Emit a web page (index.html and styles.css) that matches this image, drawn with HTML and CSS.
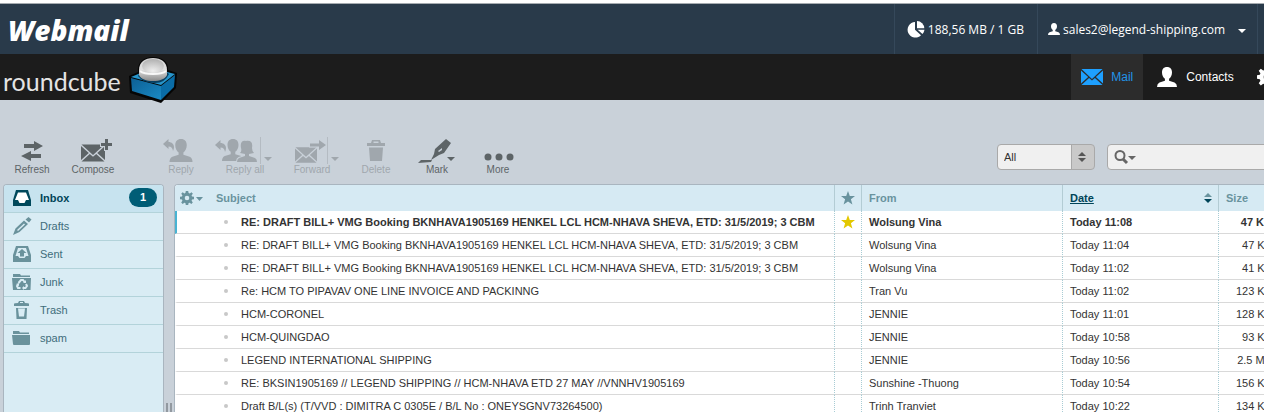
FILE: index.html
```html
<!DOCTYPE html>
<html lang="en">
<head>
    <meta charset="UTF-8">
    <meta name="viewport" content="width=device-width, initial-scale=1.0">
    <title>Roundcube Webmail :: Inbox</title>
    <link rel="stylesheet" href="styles.css">
</head>
<body>
    <!-- Shared shapes -->
    <svg class="symbols" aria-hidden="true">
        <symbol id="person" viewBox="0 0 24 24">
            <path d="M12 0C8 0 6 2.500 6 6.500C6 10 7.500 12.500 9.500 14V16.500L3 18.500Q0 20 0 24H24Q24 20 21 18.500L14.500 16.500V14C16.500 12.500 18 10 18 6.500C18 2.500 16 0 12 0Z"/>
        </symbol>
        <symbol id="envelope" viewBox="0 0 24 17">
            <path d="M0.500 0H23.500L12 10.500ZM0 1.500L7.800 8.500L0 15.500ZM24 1.500V15.500L16.200 8.500ZM0.500 17L8.800 9.500L12 12.300L15.200 9.500L23.500 17Z"/>
        </symbol>
        <symbol id="back-arrow" viewBox="0 0 12 12">
            <path d="M5.500 0V3C10 3 12.500 7 10 12C9.500 9 8.500 7.500 5.500 7.500V10L0 5Z"/>
        </symbol>
        <symbol id="gear" viewBox="0 0 14 14">
            <path fill-rule="evenodd" d="M5.800 0H8.200L8.600 2L9.800 2.500L11.500 1.200L12.900 2.700L11.600 4.300L12 5.500L14 5.800V8.200L12 8.600L11.600 9.700L12.800 11.400L11.300 12.900L9.700 11.700L8.600 12.100L8.200 14H5.800L5.400 12.100L4.300 11.700L2.700 12.900L1.200 11.400L2.400 9.700L2 8.600L0 8.200V5.800L2 5.500L2.400 4.300L1.200 2.700L2.700 1.200L4.300 2.500L5.400 2ZM7 4.700A2.300 2.300 0 1 0 7 9.300A2.300 2.300 0 1 0 7 4.700Z"/>
        </symbol>
        <symbol id="star" viewBox="0 0 14 14">
            <path d="M7 0L8.800 4.900L14 5L9.900 8.200L11.400 13.400L7 10.400L2.600 13.400L4.100 8.200L0 5L5.200 4.900Z"/>
        </symbol>
    </svg>

    <!-- Webmail bar -->
    <div class="webmail-bar">
        <a class="webmail-logo" href="#">Webmail</a>
        <div class="account">
            <div class="account-item quota">
                <svg width="18" height="17" viewBox="0 0 18 17"><path d="M8 1A7.800 7.800 0 1 0 14 14.200L8 8.800Z"/><path d="M10 0A7.500 7.500 0 0 1 17.300 7.200H10Z"/><path d="M10.600 8.700H17.500A8 8 0 0 1 15.500 13Z"/></svg>
                188,56 MB / 1 GB
            </div>
            <button type="button" class="account-item user">
                <svg width="12" height="12"><use href="#person"/></svg>
                sales2@legend-shipping.com
                <svg class="user-caret" width="8" height="4"><path d="M0 0H8L4 4Z"/></svg>
            </button>
            <div class="account-end"></div>
        </div>
    </div>

    <!-- Roundcube header -->
    <header>
        <a class="logo" href="#">
            <span>roundcube</span>
            <svg width="50" height="48" viewBox="0 0 50 48">
                <defs>
                    <linearGradient id="ball" x1="0" y1="0" x2="0" y2="1">
                        <stop offset="0" stop-color="#d4d4d4"/>
                        <stop offset="0.5" stop-color="#e0e0e0"/>
                        <stop offset="1" stop-color="#8c8c8c"/>
                    </linearGradient>
                    <radialGradient id="glass" cx="0.5" cy="0.85" r="0.8">
                        <stop offset="0" stop-color="#eeeeee"/>
                        <stop offset="1" stop-color="#b4b4b4"/>
                    </radialGradient>
                    <linearGradient id="side" x1="0" y1="0" x2="1" y2="1">
                        <stop offset="0" stop-color="#0d5f94"/>
                        <stop offset="1" stop-color="#1a8ac4"/>
                    </linearGradient>
                </defs>
                <path fill="#050505" d="M0 19L9 15C8 5 15 0 24 0S40 5 39 13L48 16L47 31L32 46L1 36Z"/>
                <path fill="#2795cb" d="M2 20L14 15H38L46 17L32 28Z"/>
                <path fill="url(#side)" d="M2 21L32 29V43L3 34Z"/>
                <path fill="#0a6ca6" d="M32 29L46 18L45 30L32 43Z"/>
                <path fill="#083f61" d="M9 19Q14 26 26 26Q36 26 40 17L36 14H12Z"/>
                <path fill="url(#ball)" d="M10 13C10 5 16 1 24 1S38 5 38 13V18C36 22 31 24 24 24S12 22 10 18Z"/>
                <ellipse cx="24" cy="9" rx="11" ry="7" fill="url(#glass)"/>
                <path fill="none" stroke="#f8f8f8" stroke-width="2" d="M11 14C16 18 32 18 37 14"/>
            </svg>
        </a>
        <nav>
            <a class="active" href="#"><svg width="22" height="16" viewBox="0 0 24 17" preserveAspectRatio="none"><use href="#envelope" width="24" height="17"/></svg>Mail</a>
            <a href="#"><svg width="20" height="20"><use href="#person"/></svg>Contacts</a>
            <a href="#"><svg width="20" height="20"><use href="#gear"/></svg>Settings</a>
        </nav>
    </header>

    <!-- Toolbar -->
    <div class="toolbar">
        <div class="actions">
            <button type="button">
                <svg width="60" height="28"><path d="M22 8H32V5L41 10L32 15V12H22ZM39 18H29V15L19 20L29 25V22H39Z"/></svg>
                Refresh
            </button>
            <button type="button">
                <svg width="60" height="28"><use href="#envelope" x="18" y="8" width="24" height="18"/><path class="plus" d="M42 3H45V7H49V10H45V14H42V10H38V7H42Z"/></svg>
                Compose
            </button>
            <button type="button" class="first-reply" disabled>
                <svg width="60" height="28"><use href="#back-arrow" x="12" y="3" width="12" height="12"/><use href="#person" x="18" y="3" width="24" height="23"/></svg>
                Reply
            </button>
            <button type="button" class="wide" disabled>
                <svg width="66" height="28"><use href="#back-arrow" x="3" y="4" width="12" height="12"/><use href="#person" x="10" y="3" width="22" height="22"/><path class="outlined" d="M34 5C39 4 41 7 40 12Q40 15 42 17L37 18V20L43 22Q45 23 45 26H25Q25 23 27 22L33 20V18L28 17Q30 15 29 12C28 7 30 4 34 5Z"/><path class="divider" d="M48.500 1V28"/><path d="M52 21H60L56 25Z"/></svg>
                Reply all
            </button>
            <button type="button" class="wide" disabled>
                <svg width="66" height="28"><use href="#envelope" x="16" y="11" width="22" height="16"/><path class="outlined" d="M31 7.500H40V4L47 9L40 14V10.500H31Z"/><path class="divider" d="M48.500 1V28"/><path d="M52 21H60L56 25Z"/></svg>
                Forward
            </button>
            <button type="button" disabled>
                <svg width="60" height="28"><path d="M21 7H25L26 4H34L35 7H39V10H21ZM27.500 5.500V7H32.500V5.500ZM23 11.500H37L36 25H24Z" fill-rule="evenodd"/></svg>
                Delete
            </button>
            <button type="button">
                <svg width="60" height="28"><path fill-rule="evenodd" d="M39 3L44 7L37 17L32 19L24 24L27 18L28 13ZM35 12L31 15L32 16L35 14Z"/><path d="M14 24H25L24 26L11 27Z"/><path d="M40 21H48L44 25Z"/></svg>
                Mark
            </button>
            <button type="button">
                <svg width="60" height="28"><circle cx="20" cy="21" r="3.500"/><circle cx="31" cy="21" r="3.500"/><circle cx="42" cy="21" r="3.500"/></svg>
                More
            </button>
        </div>
        <div class="search-tools">
            <div class="filter">
                <select aria-label="Filter"><option>All</option><option>Unread</option><option>Flagged</option></select>
                <svg width="8" height="12"><path d="M0 5L4 1L8 5ZM0 7H8L4 11Z"/></svg>
            </div>
            <div class="search-box">
                <svg width="24" height="16"><circle cx="6" cy="6.500" r="4.500"/><path class="handle" d="M9 10L13 14"/><path class="caret" d="M14 7H22L18 11Z"/></svg>
                <input type="text" aria-label="Search">
            </div>
        </div>
    </div>

    <main>
        <!-- Folders -->
        <ul class="folders">
            <li class="selected"><a href="#"><svg width="20" height="18"><path d="M4 1H16L19 11V17H1V11Z"/><path class="opening" d="M6 3.500H14L17 11H14L12.500 14H7.500L6 11H3Z"/></svg>Inbox<span class="count">1</span></a></li>
            <li><a href="#"><svg width="20" height="18"><path fill-rule="evenodd" d="M1 18L3.500 11.500L12 3.500L16 7L7.500 15ZM5 13L6 14L13 7.500L12 6.500Z"/><path d="M13.500 2.500L16.500 0L19.500 2.500L17 5.500Z"/></svg>Drafts</a></li>
            <li><a href="#"><svg width="20" height="18"><path fill-rule="evenodd" d="M4 1H16L19 10V17H1V10ZM6 3L3.500 11H6L7.500 13H12.500L14 11H16.500L14 3Z"/><path d="M10 4L14.500 8H12V11.500H8V8H5.500Z"/></svg>Sent</a></li>
            <li><a href="#"><svg width="20" height="18"><path d="M1 1H8L9 2.500H18V4H1ZM0 5H19L18.500 17H1Z"/><path class="recycle" d="M6.500 10L9 7H11L13 9.500M14 11L15 13L13.500 15H11M8.500 15H6L5 13L6 11.500"/><path class="recycle-tips" d="M11 10H14V7ZM12 13V17L10 15ZM4 11L7 10V13Z"/></svg>Junk</a></li>
            <li><a href="#"><svg width="20" height="20"><path fill-rule="evenodd" d="M2 4Q2 3 6 3L7 1H12L13 3Q17 3 17 4V6H2ZM8 2V3H11V2ZM4 8H15L14.500 19H4.500ZM6 8.500L7 16.500H12L13 8.500Z"/></svg>Trash</a></li>
            <li><a href="#"><svg width="20" height="18"><path d="M1 2H7L8 3.500H17V5H1ZM0 6H18V15Q18 16 17 16H2Q1 16 1 15Z"/></svg>spam</a></li>
        </ul>

        <div class="splitter"><span></span><span></span></div>

        <!-- Messages -->
        <div class="messages">
            <table>
                <colgroup>
                    <col>
                    <col class="col-flag">
                    <col class="col-from">
                    <col class="col-date">
                    <col class="col-size">
                </colgroup>
                <thead>
                    <tr>
                        <th>
                            <div class="subject-head">
                                <button type="button" aria-label="List options"><svg width="24" height="14"><use href="#gear" width="14" height="14"/><path d="M16 6H23L19.500 10Z"/></svg></button>
                                <a href="#">Subject</a>
                            </div>
                        </th>
                        <th class="flag"><svg width="14" height="14"><use href="#star"/></svg></th>
                        <th><a href="#">From</a></th>
                        <th>
                            <a class="sorted" href="#"><span>Date</span><svg width="8" height="10"><path class="up" d="M0 4L4 0L8 4Z"/><path d="M0 6H8L4 10Z"/></svg></a>
                        </th>
                        <th><a href="#">Size</a></th>
                    </tr>
                </thead>
                <tbody>
                    <tr class="unread">
                        <td><a href="#">RE: DRAFT BILL+ VMG Booking BKNHAVA1905169 HENKEL LCL HCM-NHAVA SHEVA, ETD: 31/5/2019; 3 CBM</a></td>
                        <td class="flag"><svg width="14" height="14"><use href="#star"/></svg></td>
                        <td>Wolsung Vina</td>
                        <td>Today 11:08</td>
                        <td class="size">47 KB</td>
                    </tr>
                    <tr>
                        <td><a href="#">RE: DRAFT BILL+ VMG Booking BKNHAVA1905169 HENKEL LCL HCM-NHAVA SHEVA, ETD: 31/5/2019; 3 CBM</a></td>
                        <td></td>
                        <td>Wolsung Vina</td>
                        <td>Today 11:04</td>
                        <td class="size">47 KB</td>
                    </tr>
                    <tr>
                        <td><a href="#">RE: DRAFT BILL+ VMG Booking BKNHAVA1905169 HENKEL LCL HCM-NHAVA SHEVA, ETD: 31/5/2019; 3 CBM</a></td>
                        <td></td>
                        <td>Wolsung Vina</td>
                        <td>Today 11:02</td>
                        <td class="size">41 KB</td>
                    </tr>
                    <tr>
                        <td><a href="#">Re: HCM TO PIPAVAV ONE LINE INVOICE AND PACKINNG</a></td>
                        <td></td>
                        <td>Tran Vu</td>
                        <td>Today 11:02</td>
                        <td class="size">123 KB</td>
                    </tr>
                    <tr>
                        <td><a href="#">HCM-CORONEL</a></td>
                        <td></td>
                        <td>JENNIE</td>
                        <td>Today 11:01</td>
                        <td class="size">128 KB</td>
                    </tr>
                    <tr>
                        <td><a href="#">HCM-QUINGDAO</a></td>
                        <td></td>
                        <td>JENNIE</td>
                        <td>Today 10:58</td>
                        <td class="size">93 KB</td>
                    </tr>
                    <tr>
                        <td><a href="#">LEGEND INTERNATIONAL SHIPPING</a></td>
                        <td></td>
                        <td>JENNIE</td>
                        <td>Today 10:56</td>
                        <td class="size">2.5 MB</td>
                    </tr>
                    <tr>
                        <td><a href="#">RE: BKSIN1905169 // LEGEND SHIPPING // HCM-NHAVA ETD 27 MAY //VNNHV1905169</a></td>
                        <td></td>
                        <td>Sunshine -Thuong</td>
                        <td>Today 10:54</td>
                        <td class="size">156 KB</td>
                    </tr>
                    <tr>
                        <td><a href="#">Draft B/L(s) (T/VVD : DIMITRA C 0305E / B/L No : ONEYSGNV73264500)</a></td>
                        <td></td>
                        <td>Trinh Tranviet</td>
                        <td>Today 10:22</td>
                        <td class="size">134 KB</td>
                    </tr>
                </tbody>
            </table>
        </div>
    </main>
</body>
</html>
```

FILE: styles.css
```css
/* General Styles */
* {
    box-sizing: border-box;
}

body {
    display: flex;
    flex-direction: column;
    height: 100vh;
    margin: 0;
    overflow: hidden;
    background-color: #c9d1d9;
    color: #333;
    font-family: "Liberation Sans", Arial, sans-serif;
    font-size: 11px;
}

a {
    color: inherit;
    text-decoration: none;
}

button {
    padding: 0;
    border: none;
    background: none;
    color: inherit;
    font: inherit;
    cursor: pointer;
}

svg {
    flex: none;
    fill: currentColor;
}

.symbols {
    position: absolute;
    width: 0;
    height: 0;
}

/* Webmail bar */
.webmail-bar {
    display: flex;
    flex: none;
    justify-content: space-between;
    height: 54px;
    border-top: 3px solid #fff;
    background-color: #293a4a;
    box-shadow: inset 0 1px #a5abb0;
    color: #fff;
}

.webmail-logo {
    padding-left: 8px;
    font: italic 800 28px/54px "Open Sans", sans-serif;
}

.account {
    display: flex;
    padding-top: 1px;
    font: 12px "Open Sans", sans-serif;
}

.account-item {
    display: flex;
    align-items: center;
    border-left: 1px solid #35485a;
    font: inherit;
}

.quota {
    gap: 3px;
    padding: 0 13px 0 12px;
}

.user {
    gap: 3px;
    padding: 0 11px 0 10px;
}

.user-caret {
    margin: 3px 0 0 10px;
}

.account-end {
    width: 7px;
    border-left: 1px solid #35485a;
}

/* Roundcube header */
header {
    display: flex;
    flex: none;
    justify-content: space-between;
    height: 46px;
    background-color: #1c1c1c;
    color: #fff;
}

.logo {
    display: flex;
    gap: 8px;
    padding: 3px 0 0 3px;
    color: #e4e4e4;
    font: 25px/48px Lato, sans-serif;
}

nav {
    display: flex;
    margin-right: -74px;
    font-size: 12px;
}

nav a {
    display: flex;
    align-items: center;
    gap: 9px;
    padding: 0 9px 0 14px;
}

nav .active {
    gap: 8px;
    padding: 0 10px;
    background-color: #2c2c2c;
    color: #2194e8;
}

nav .active svg {
    color: #1ea0ff;
}

/* Toolbar */
.toolbar {
    display: flex;
    flex: none;
    justify-content: space-between;
    height: 84px;
    padding: 36px 0 0 2px;
}

.actions {
    display: flex;
    gap: 1px;
    height: 40px;
    color: #5d6467;
    font-size: 10px;
}

.actions button {
    display: flex;
    flex-direction: column;
    align-items: center;
    width: 60px;
    line-height: 12px;
}

.actions .wide {
    width: 66px;
}

.actions .first-reply {
    margin-left: 27px;
}

.actions button:disabled {
    color: #a0a7ad;
    cursor: default;
}

.plus,
.outlined {
    stroke: #c9d1d9;
    paint-order: stroke;
    stroke-width: 2px;
}

.divider {
    stroke: #b4bbc2;
}

.search-tools {
    display: flex;
    gap: 12px;
    height: 26px;
    margin: 8px -16px 0 0;
}

.filter {
    display: flex;
    align-items: center;
    width: 98px;
    border: 1px solid #a9a9a9;
    border-radius: 4px;
    background: linear-gradient(to left, #c9c9c9 22px, #a9a9a9 22px, #a9a9a9 23px, #f0f0f0 23px);
    color: #555;
}

.filter select {
    flex: 1;
    height: 24px;
    padding: 0 6px;
    border: none;
    background: none;
    color: #333;
    font: inherit;
    appearance: none;
}

.filter svg {
    margin-right: 8px;
}

.search-box {
    display: flex;
    align-items: center;
    width: 173px;
    padding-left: 6px;
    border: 1px solid #a9a9a9;
    border-radius: 4px;
    background-color: #f0f0f0;
    color: #666;
}

.search-box circle,
.search-box .handle {
    fill: none;
    stroke: currentColor;
    stroke-width: 2px;
}

.search-box .handle {
    stroke-width: 3px;
}

.search-box input {
    flex: 1;
    min-width: 0;
    border: none;
    background: none;
    font: inherit;
}

/* Main Section */
main {
    display: flex;
    flex: 1;
    min-height: 0;
    margin-right: -16px;
    padding-left: 3px;
}

/* Folders */
.folders {
    width: 161px;
    margin: 0;
    padding: 0;
    border: 1px solid #a9b5bf;
    border-bottom: none;
    border-radius: 4px 4px 0 0;
    background-color: #d9ecf4;
    color: #3f6c7b;
    list-style: none;
}

.folders li {
    border-bottom: 1px solid #b3d3da;
}

.folders a {
    display: flex;
    align-items: center;
    gap: 8px;
    height: 27px;
    padding: 0 6px 2px 8px;
}

.folders svg {
    color: #6a929c;
}

.folders .selected {
    border-radius: 3px 3px 0 0;
    background-color: #c7e3ef;
    color: #004458;
    font-weight: bold;
}

.folders .selected svg {
    color: #00485b;
}

.folders .opening {
    fill: #fff;
}

.folders .recycle {
    fill: none;
    stroke: #d9ecf4;
    stroke-width: 2px;
}

.folders .recycle-tips {
    fill: #d9ecf4;
}

.count {
    width: 28px;
    margin-left: auto;
    border-radius: 10px;
    background-color: #005d76;
    color: #fff;
    line-height: 19px;
    text-align: center;
}

.splitter {
    display: flex;
    align-items: flex-end;
    justify-content: center;
    gap: 2px;
    width: 10px;
}

.splitter span {
    width: 2px;
    height: 9px;
    background-color: #9299a0;
}

/* Messages */
.messages {
    flex: 1;
    min-width: 0;
    overflow: hidden;
    border: 1px solid #a9b5bf;
    border-bottom: none;
    border-radius: 4px 4px 0 0;
    background-color: #fff;
}

table {
    width: 100%;
    border-spacing: 0;
    table-layout: fixed;
}

.col-flag {
    width: 27px;
}

.col-from {
    width: 201px;
}

.col-date {
    width: 156px;
}

.col-size {
    width: 61px;
}

th,
td {
    overflow: hidden;
    padding: 0 7px;
    text-align: left;
    white-space: nowrap;
}

th {
    height: 26px;
    border-left: 1px solid #b3ccd4;
    background-color: #d6eaf3;
    color: #69939e;
}

td {
    height: 23px;
    border-bottom: 1px solid #d9d9d9;
    border-left: 1px dotted #a8ccd4;
}

th:first-child {
    padding-left: 5px;
    border-left: none;
}

td:first-child {
    border-left: 2px solid transparent;
}

.subject-head {
    display: flex;
    align-items: center;
    gap: 12px;
}

.subject-head svg,
.flag svg {
    display: block;
}

.sorted {
    display: flex;
    align-items: center;
    justify-content: space-between;
    margin-right: -1px;
    color: #004458;
}

.sorted span {
    text-decoration: underline;
}

.sorted .up {
    fill: #69939e;
}

td:first-child a::before {
    content: "";
    display: inline-block;
    width: 4px;
    height: 4px;
    margin: 0 13px 2px 40px;
    border-radius: 50%;
    background-color: #c8c8c8;
    vertical-align: middle;
}

th.flag,
td.flag {
    padding: 0 6px;
}

td.flag {
    color: #e3c800;
}

td.size {
    text-align: right;
}

.unread td {
    font-weight: bold;
}

.unread td:first-child {
    border-left-color: #49b3d2;
}
```
